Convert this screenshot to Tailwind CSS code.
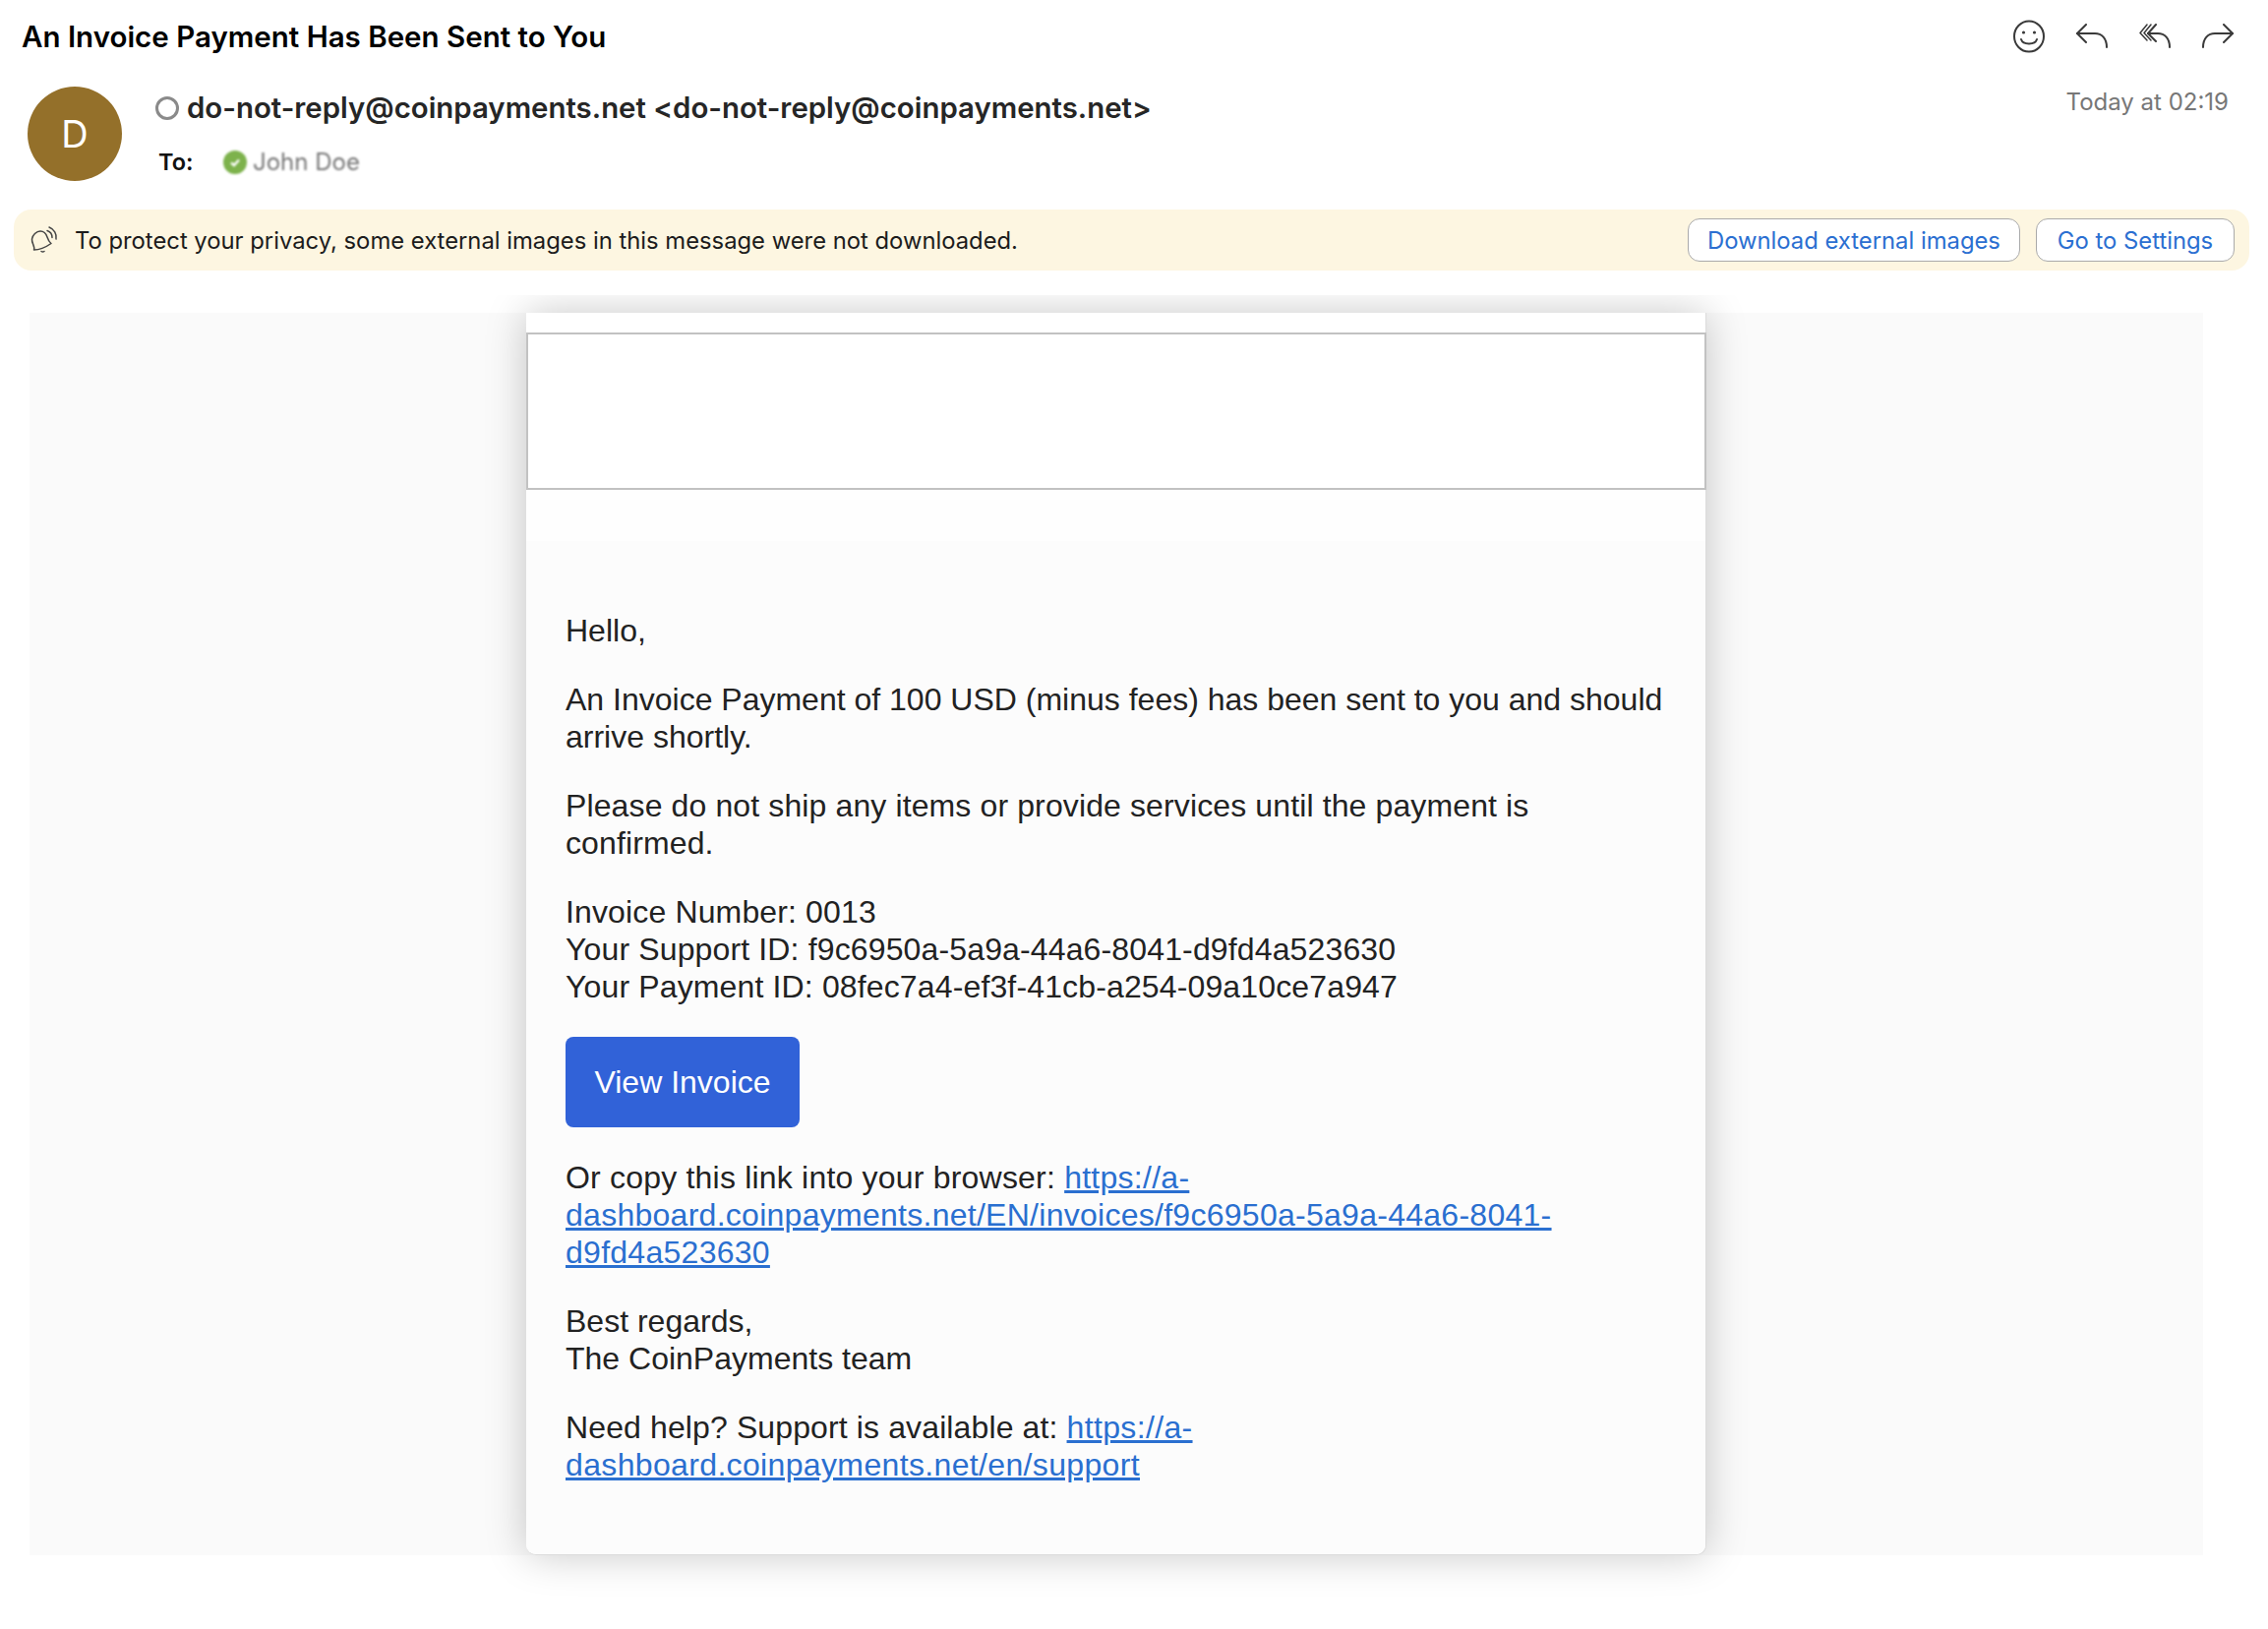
<!DOCTYPE html>
<html lang="en">
<head>
  <meta charset="UTF-8">
  <title>An Invoice Payment Has Been Sent to You</title>
  <script src="https://cdn.jsdelivr.net/npm/@tailwindcss/browser@4"></script>
</head>
<body class="bg-white min-h-screen font-['Inter',sans-serif] overflow-hidden">

  <!-- Subject + actions -->
  <div class="h-[74px] flex items-center justify-between pl-[22px] pr-[35px]">
    <h1 class="text-[29.5px] font-semibold text-black">An Invoice Payment Has Been Sent to You</h1>
    <div class="flex items-center gap-[32px] text-[#3a3a3a]">
      <svg class="w-[32px] h-[34px]" viewBox="0 0 32 34" fill="none" stroke="currentColor" stroke-width="2">
        <ellipse cx="16" cy="17" rx="15" ry="15.5"></ellipse>
        <circle cx="10.5" cy="13" r="1.6" fill="currentColor" stroke="none"></circle>
        <circle cx="21.5" cy="13" r="1.6" fill="currentColor" stroke="none"></circle>
        <path d="M8 20c2 6 14 6 16 0" stroke-linecap="round"></path>
      </svg>
      <svg class="w-[32px] h-[26px]" viewBox="0 0 32 26" fill="none" stroke="currentColor" stroke-width="2" stroke-linecap="round" stroke-linejoin="round">
        <path d="M10 1 1 10l9 9"></path><path d="M1 10h18c7 0 12 5 12 14"></path>
      </svg>
      <svg class="w-[32px] h-[26px]" viewBox="0 0 32 26" fill="none" stroke="currentColor" stroke-width="2" stroke-linecap="round" stroke-linejoin="round">
        <path d="M8 1 1 9.5 8 17" stroke-width="1.5"></path><path d="M12 1 5 9.5 12 17" stroke-width="1.5"></path><path d="M17 1 9 10l8 8"></path><path d="M9 10h10c7 0 12 5 12 14"></path>
      </svg>
      <svg class="w-[32px] h-[26px]" viewBox="0 0 32 26" fill="none" stroke="currentColor" stroke-width="2" stroke-linecap="round" stroke-linejoin="round">
        <path d="M22 1l9 9-9 9"></path><path d="M31 10H13C6 10 1 15 1 24"></path>
      </svg>
    </div>
  </div>

  <!-- Sender -->
  <div class="h-[96px] mt-[14px] pl-[28px] pr-[40px] flex">
    <div class="w-[96px] h-[96px] rounded-full bg-[#94702a] text-white text-[38px] flex items-center justify-center shrink-0">D</div>
    <div class="flex-1 pl-[34px]">
      <div class="h-[44px] flex items-center gap-[8px]">
        <span class="w-[24px] h-[24px] rounded-full border-[3px] border-[#8a8a8a]"></span>
        <span class="text-[29.4px] font-semibold text-[#262626]">do-not-reply@coinpayments.net &lt;do-not-reply@coinpayments.net&gt;</span>
      </div>
      <div class="h-[44px] mt-[11px] flex items-center pl-[3px]">
        <span class="w-[66px] text-[23.5px] font-semibold text-[#111]">To:</span>
        <span class="flex items-center gap-[6px] blur-[1px]">
          <span class="w-[24px] h-[24px] rounded-full bg-[#7db24c] flex items-center justify-center">
            <svg class="w-[14px] h-[14px]" viewBox="0 0 14 14" fill="none" stroke="white" stroke-width="2.4"><path d="M3 7.5 6 10 11 4.5"></path></svg>
          </span>
          <span class="text-[24px] text-[#777]">John Doe</span>
        </span>
      </div>
    </div>
    <div class="text-[24px] leading-[32px] text-[#777]">Today at 02:19</div>
  </div>

  <!-- Privacy banner -->
  <div class="h-[62px] mt-[29px] ml-[14px] mr-[19px] pl-[16px] pr-[15px] rounded-[18px] bg-[#fdf6e1] flex items-center">
    <svg class="w-[30px] h-[28px] text-[#444]" viewBox="0 0 30 28" fill="none" stroke="currentColor" stroke-width="1.5" stroke-linecap="round" stroke-linejoin="round">
      <path d="M4.5 24C6 21 2 17 2.5 13 3 9 7 5 11 5c4 0 6 3 7 6 1 3 2 5 4 6.500C17 21 10 24 4.500 24z"></path>
      <path d="M12 25.500c1 .7 2 .7 3 0"></path>
      <path d="M18 4.500c3 1 5 3.500 5 7"></path>
      <path d="M20 1c5 2 8 7 7 12"></path>
    </svg>
    <span class="ml-[16px] pt-[2px] flex-1 text-[23.8px] text-[#1c1c1c]">To protect your privacy, some external images in this message were not downloaded.</span>
    <div class="flex gap-[16px]">
      <button class="w-[338px] h-[44px] pt-[1px] rounded-[12px] bg-white border border-[#aaa] text-[23.8px] text-[#2b6fd1]">Download external images</button>
      <button class="w-[202px] h-[44px] pt-[1px] rounded-[12px] bg-white border border-[#aaa] text-[23.8px] text-[#2b6fd1]">Go to Settings</button>
    </div>
  </div>

  <!-- Message -->
  <div class="mt-[43px] ml-[30px] w-[2210px] bg-[#fafafa]">
    <div class="mx-auto w-[1200px] h-[1263px] bg-white rounded-b-[10px] border-r border-b border-[#dcdcdc] shadow-[0_0_42px_rgba(0,0,0,0.22)] [clip-path:inset(-18px_-60px_-60px_-60px)] font-['Liberation_Sans',sans-serif] text-[32px] leading-[38px] text-[#222]">
      <div class="h-[20px]"></div>
      <div class="h-[160px] -mr-px bg-white border-2 border-[#c2c2c2]"></div>
      <div class="h-[52px] bg-[#fefefe]"></div>
      <div class="h-[1030px] bg-[#fcfcfc] rounded-b-[10px] pt-[72px] px-[40px] flex flex-col gap-[32px]">
        <p>Hello,</p>
        <p>An Invoice Payment of 100 USD (minus fees) has been sent to you and should arrive shortly.</p>
        <p class="tracking-[0.12px]">Please do not ship any items or provide services until the payment is confirmed.</p>
        <p class="tracking-[0.14px]">Invoice Number: 0013<br>Your Support ID: f9c6950a-5a9a-44a6-8041-d9fd4a523630<br>Your Payment ID: 08fec7a4-ef3f-41cb-a254-09a10ce7a947</p>
        <a class="w-[238px] h-[92px] rounded-[8px] bg-[#3162d8] text-white flex items-center justify-center">View Invoice</a>
        <p class="tracking-[0.2px]">Or copy this link into your browser: <a class="text-[#2a6fd0] underline tracking-[0.27px]">https://a-dashboard.coinpayments.net/EN/invoices/f9c6950a-5a9a-44a6-8041-d9fd4a523630</a></p>
        <p>Best regards,<br>The CoinPayments team</p>
        <p class="tracking-[0.12px]">Need help? Support is available at: <a class="text-[#2a6fd0] underline tracking-[0.35px]">https://a-dashboard.coinpayments.net/en/support</a></p>
      </div>
    </div>
  </div>

</body>
</html>
